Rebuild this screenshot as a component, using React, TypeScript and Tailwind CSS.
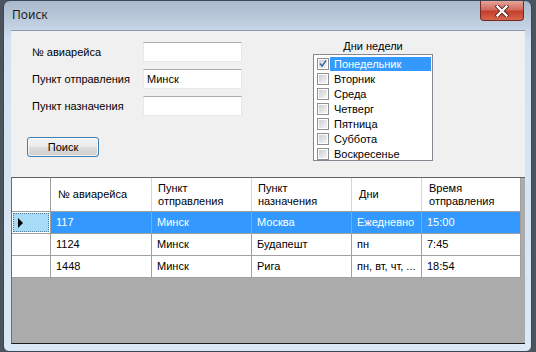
const days = [
  "Понедельник",
  "Вторник",
  "Среда",
  "Четверг",
  "Пятница",
  "Суббота",
  "Воскресенье",
];

const rows = [
  { no: "117", from: "Минск", to: "Москва", days: "Ежедневно", time: "15:00" },
  { no: "1124", from: "Минск", to: "Будапешт", days: "пн", time: "7:45" },
  { no: "1448", from: "Минск", to: "Рига", days: "пн, вт, чт, ...", time: "18:54" },
];

const widths = ["w-[101px]", "w-[100px]", "w-[100px]", "w-[70px]", "w-[99px]"];

function TextBox({ value }: { value?: string }) {
  return (
    <div className="w-[99px] h-[20px] bg-white border border-[#e3e9ef] border-t-[#abadb3] pl-[3px] flex items-center">
      {value}
    </div>
  );
}

function CheckBox({ checked }: { checked?: boolean }) {
  return (
    <div className="w-[12px] h-[12px] border border-[#8e8f8f] bg-white p-[1px] shrink-0">
      <div className="w-full h-full bg-gradient-to-br from-[#cbcfd5] to-[#f6f6f6] flex items-center justify-center">
        {checked && (
          <svg width="9" height="9" viewBox="0 0 9 9">
            <path d="M1 4.5 L3.5 7.5 L8 1" fill="none" stroke="#3b5e9e" strokeWidth="1.6" />
          </svg>
        )}
      </div>
    </div>
  );
}

export default function App() {
  return (
    <div className="w-[536px] h-[352px] bg-[#4b535d] overflow-hidden text-[11px] text-black font-['Liberation_Sans',Arial,sans-serif]">
      <div className="ml-[3px] w-[529px] h-[352px] rounded-t-[7px] rounded-b-[6px] border border-[#39475a] bg-[linear-gradient(180deg,#a9b9cb_0%,#d3e2f1_12%,#dbe8f5_100%)] flex flex-col">
        {/* TITLE BAR */}
        <div className="h-[29px] flex items-start shrink-0">
          <div className="pl-[8px] pt-[6px] text-[12px] leading-[16px] text-[#1e1e1e] font-['Noto_Sans',sans-serif]">
            Поиск
          </div>
          <div className="ml-auto mr-[7px] w-[44px] h-[20px] rounded-b-[4px] border border-t-0 border-[#6f2b24] bg-[linear-gradient(180deg,#e6a397_0%,#d26b5d_45%,#c4402d_55%,#d8644c_100%)] flex items-center justify-center">
            <svg width="14" height="12" viewBox="0 0 14 12">
              <path d="M2.5 1.5 L11.5 10.5 M11.5 1.5 L2.5 10.5" stroke="#4a1d17" strokeWidth="4" strokeLinecap="square" />
              <path d="M2.5 1.5 L11.5 10.5 M11.5 1.5 L2.5 10.5" stroke="#ffffff" strokeWidth="2.4" strokeLinecap="square" />
            </svg>
          </div>
        </div>

        {/* CLIENT */}
        <div className="ml-[7px] w-[514px] h-[314px] flex flex-col border-t border-[#8a9bb0]">
          {/* FORM */}
          <div className="h-[146px] bg-[#f0f0f0] flex shrink-0">
            <div className="w-[302px] pl-[16px] pt-[11px] flex flex-col">
              {[
                { label: "№ авиарейса", value: "" },
                { label: "Пункт отправления", value: "Минск" },
                { label: "Пункт назначения", value: "" },
              ].map((f, i) => (
                <div key={i} className="flex items-center h-[20px] mb-[7px]">
                  <div className="w-[116px] pl-[5px]">{f.label}</div>
                  <TextBox value={f.value} />
                </div>
              ))}
              <button className="mt-[14px] w-[72px] h-[20px] rounded-[3px] border border-[#3c7fb1] bg-[linear-gradient(180deg,#f2f2f2_0%,#ebebeb_48%,#dddddd_52%,#cfcfcf_100%)] shadow-[inset_0_0_0_1px_#ffffffaa] flex items-center justify-center">
                Поиск
              </button>
            </div>

            <div className="w-[120px] pt-[8px] flex flex-col">
              <div className="h-[15px] leading-[14px] text-center">Дни недели</div>
              <div className="h-[107px] border border-[#828790] bg-white p-[1px]">
                {days.map((d, i) => (
                  <div key={d} className="flex items-center h-[15px]">
                    <div className="ml-[2px]">
                      <CheckBox checked={i === 0} />
                    </div>
                    <div
                      className={`ml-[1px] flex-1 h-[14px] pl-[4px] leading-[14px] ${
                        i === 0 ? "bg-[#3399ff] text-white" : ""
                      }`}
                    >
                      {d}
                    </div>
                  </div>
                ))}
              </div>
            </div>
          </div>

          {/* GRID */}
          <div className="flex-1 bg-[#ababab] border-t border-[#646464] border-l border-l-[#6e6e6e] border-b border-b-[#1a1a1a]">
            <div className="w-[509px]">
              {/* header */}
              <div className="flex h-[34px] bg-white border-b border-[#a0a0a0]">
                <div className="w-[39px] border-r border-[#a0a0a0]" />
                <div className={`${widths[0]} border-r border-[#d5d5d5] pl-[7px] flex items-center`}>№ авиарейса</div>
                <div className={`${widths[1]} border-r border-[#d5d5d5] pl-[6px] flex items-center leading-[13px]`}>
                  Пункт<br />отправления
                </div>
                <div className={`${widths[2]} border-r border-[#d5d5d5] pl-[6px] flex items-center leading-[13px]`}>
                  Пункт<br />назначения
                </div>
                <div className={`${widths[3]} border-r border-[#d5d5d5] pl-[7px] flex items-center`}>Дни</div>
                <div className={`${widths[4]} border-r border-[#a0a0a0] pl-[7px] flex items-center leading-[13px]`}>
                  Время<br />отправления
                </div>
              </div>

              {/* rows */}
              {rows.map((r, i) => {
                const sel = i === 0;
                const cells = [r.no, r.from, r.to, r.days, r.time];
                return (
                  <div key={r.no} className="flex h-[22px] border-b border-[#a0a0a0]">
                    {sel ? (
                      <div className="w-[39px] border-r border-[#a0a0a0] bg-white p-[1px]">
                        <div className="w-full h-full bg-[#a6dcf6] border border-dotted border-[#4c7f9f] flex items-center pl-[4px]">
                          <svg width="6" height="10" viewBox="0 0 6 10">
                            <path d="M0 0 L5 5 L0 10 Z" fill="#000" />
                          </svg>
                        </div>
                      </div>
                    ) : (
                      <div className="w-[39px] border-r border-[#a0a0a0] bg-white" />
                    )}
                    {cells.map((c, j) => (
                      <div
                        key={j}
                        className={`${widths[j]} border-r border-[#a0a0a0] pl-[5px] flex items-center whitespace-nowrap overflow-hidden ${
                          sel ? "bg-[#3399ff] text-white" : "bg-white"
                        }`}
                      >
                        {c}
                      </div>
                    ))}
                  </div>
                );
              })}
            </div>
          </div>
        </div>
      </div>
    </div>
  );
}
